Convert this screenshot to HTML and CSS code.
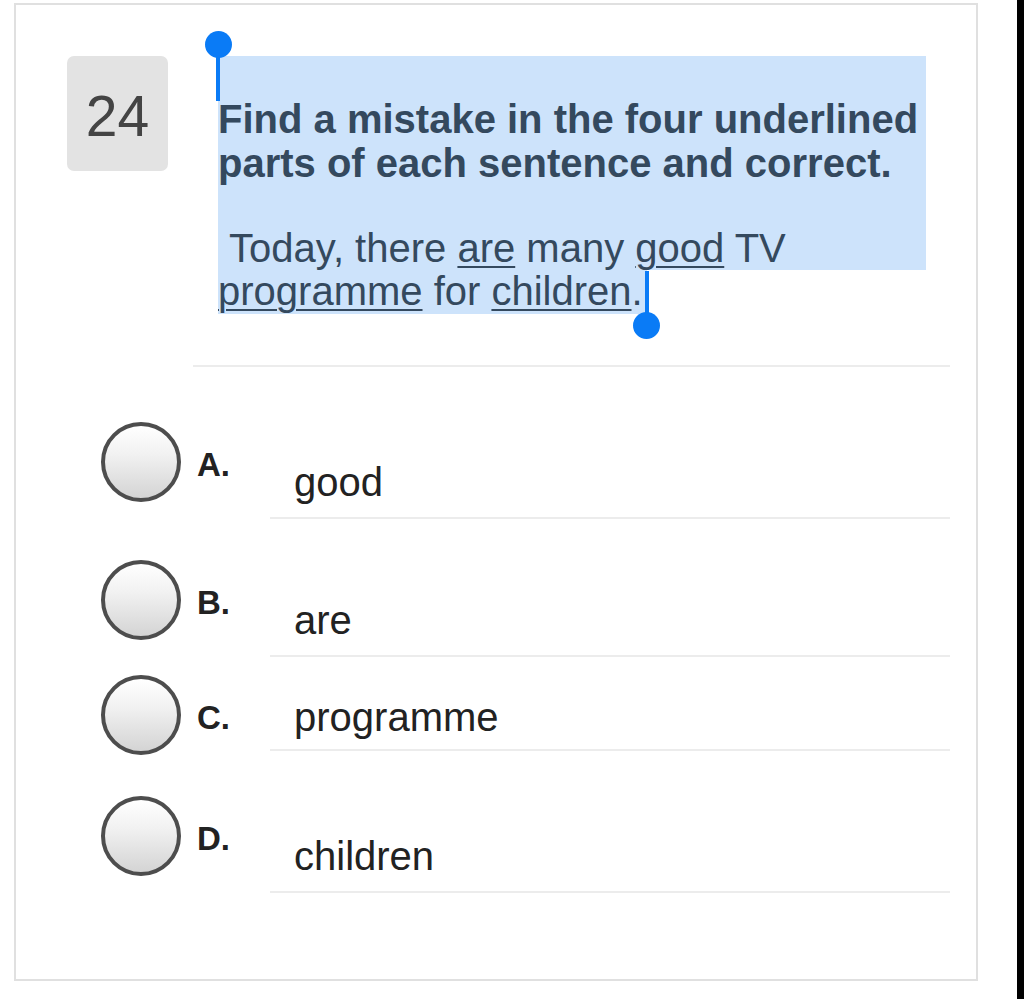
FILE: index.html
```html
<!DOCTYPE html>
<html lang="en">
<head>
<meta charset="utf-8">
<title>Question 24</title>
<link rel="stylesheet" href="styles.css">
</head>
<body>
<div class="page">
  <section class="card">
    <header class="q-head">
      <div class="q-num">24</div>
      <div class="q-body">
        <span class="handle handle-start"></span>
        <div class="q-sel">
          <p class="q-title">Find a mistake in the four underlined parts of each sentence and correct.</p>
          <p class="q-sentence">&nbsp;Today, there <u>are</u> many <u>good</u> TV</p>
        </div>
        <p class="q-sentence"><span class="sel-line"><u>programme</u> for <u>children</u>.<span class="handle handle-end"></span></span></p>
      </div>
    </header>
    <hr class="divider">
    <ul class="options">
      <li class="opt">
        <span class="radio"></span>
        <span class="opt-label">A.</span>
        <span class="opt-text">good</span>
      </li>
      <li class="opt">
        <span class="radio"></span>
        <span class="opt-label">B.</span>
        <span class="opt-text">are</span>
      </li>
      <li class="opt opt--compact">
        <span class="radio"></span>
        <span class="opt-label">C.</span>
        <span class="opt-text">programme</span>
      </li>
      <li class="opt">
        <span class="radio"></span>
        <span class="opt-label">D.</span>
        <span class="opt-text">children</span>
      </li>
    </ul>
  </section>
</div>
<div class="edge"></div>
</body>
</html>
```

FILE: styles.css
```css
html, body {
  margin: 0;
  padding: 0;
  background: #ffffff;
}

body {
  display: flex;
  min-height: 999px;
  font-family: "Liberation Sans", Arial, Helvetica, sans-serif;
}

.page {
  flex: 1;
  padding: 3px 39px 0 14px;
}

.edge {
  width: 7px;
  background: #000000;
}

.card {
  border: 2px solid #e0e0e0;
  padding: 51px 26px 86px 0;
}

.q-head {
  display: flex;
  align-items: flex-start;
  padding-left: 51px;
}

.q-num {
  width: 101px;
  height: 115px;
  box-sizing: border-box;
  padding-top: 4px;
  border-radius: 7px;
  background: #e3e3e3;
  color: #444444;
  font-size: 57px;
  display: flex;
  align-items: center;
  justify-content: center;
}

.q-body {
  position: relative;
  margin-left: 50px;
  width: 708px;
  color: #34495e;
  font-size: 40px;
  line-height: 43.5px;
}

.q-sel {
  background: #cde3fb;
  padding-top: 42px;
}

.q-title {
  margin: 0;
  font-weight: bold;
}

.q-sentence {
  margin: 0;
}

.q-sel .q-sentence {
  margin-top: 41.5px;
}

.q-body u {
  text-decoration-thickness: 2px;
  text-underline-offset: 4px;
}

.sel-line {
  position: relative;
  background: #cde3fb;
  padding: 0 4px 0 0;
  display: inline-block;
}

.handle {
  position: absolute;
  width: 4px;
  background: #0a7bf6;
}

.handle::after {
  content: "";
  position: absolute;
  width: 27px;
  height: 27px;
  border-radius: 50%;
  background: #0a7bf6;
  left: -11.5px;
}

.handle-start {
  left: -2px;
  top: -12px;
  height: 57px;
}

.handle-start::after {
  top: -13px;
}

.handle-end {
  right: -2px;
  top: 1px;
  height: 44px;
}

.handle-end::after {
  top: 41px;
}

.divider {
  border: 0;
  height: 2px;
  background: #ececec;
  margin: 51px 0 0 177px;
}

.options {
  list-style: none;
  margin: 0;
  padding: 0 0 0 85px;
}

.opt {
  display: flex;
  align-items: flex-start;
  margin-top: 41px;
}

.opt:first-child {
  margin-top: 55px;
}

.radio {
  width: 80px;
  height: 80px;
  box-sizing: border-box;
  border: 4px solid #4d4d4d;
  border-radius: 50%;
  background: linear-gradient(#ffffff 0%, #f1f1f1 40%, #d4d4d4 100%);
  flex: none;
}

.opt-label {
  width: 73px;
  margin: 25px 0 0 16px;
  font-size: 33px;
  line-height: 36px;
  font-weight: bold;
  color: #222222;
  flex: none;
}

.opt-text {
  flex: 1;
  padding: 37px 0 12px 24px;
  border-bottom: 2px solid #ececec;
  font-size: 40px;
  line-height: 46px;
  color: #222222;
}

.opt--compact {
  margin-top: 18px;
}

.opt--compact .opt-text {
  padding-top: 19px;
  padding-bottom: 9px;
}
```
